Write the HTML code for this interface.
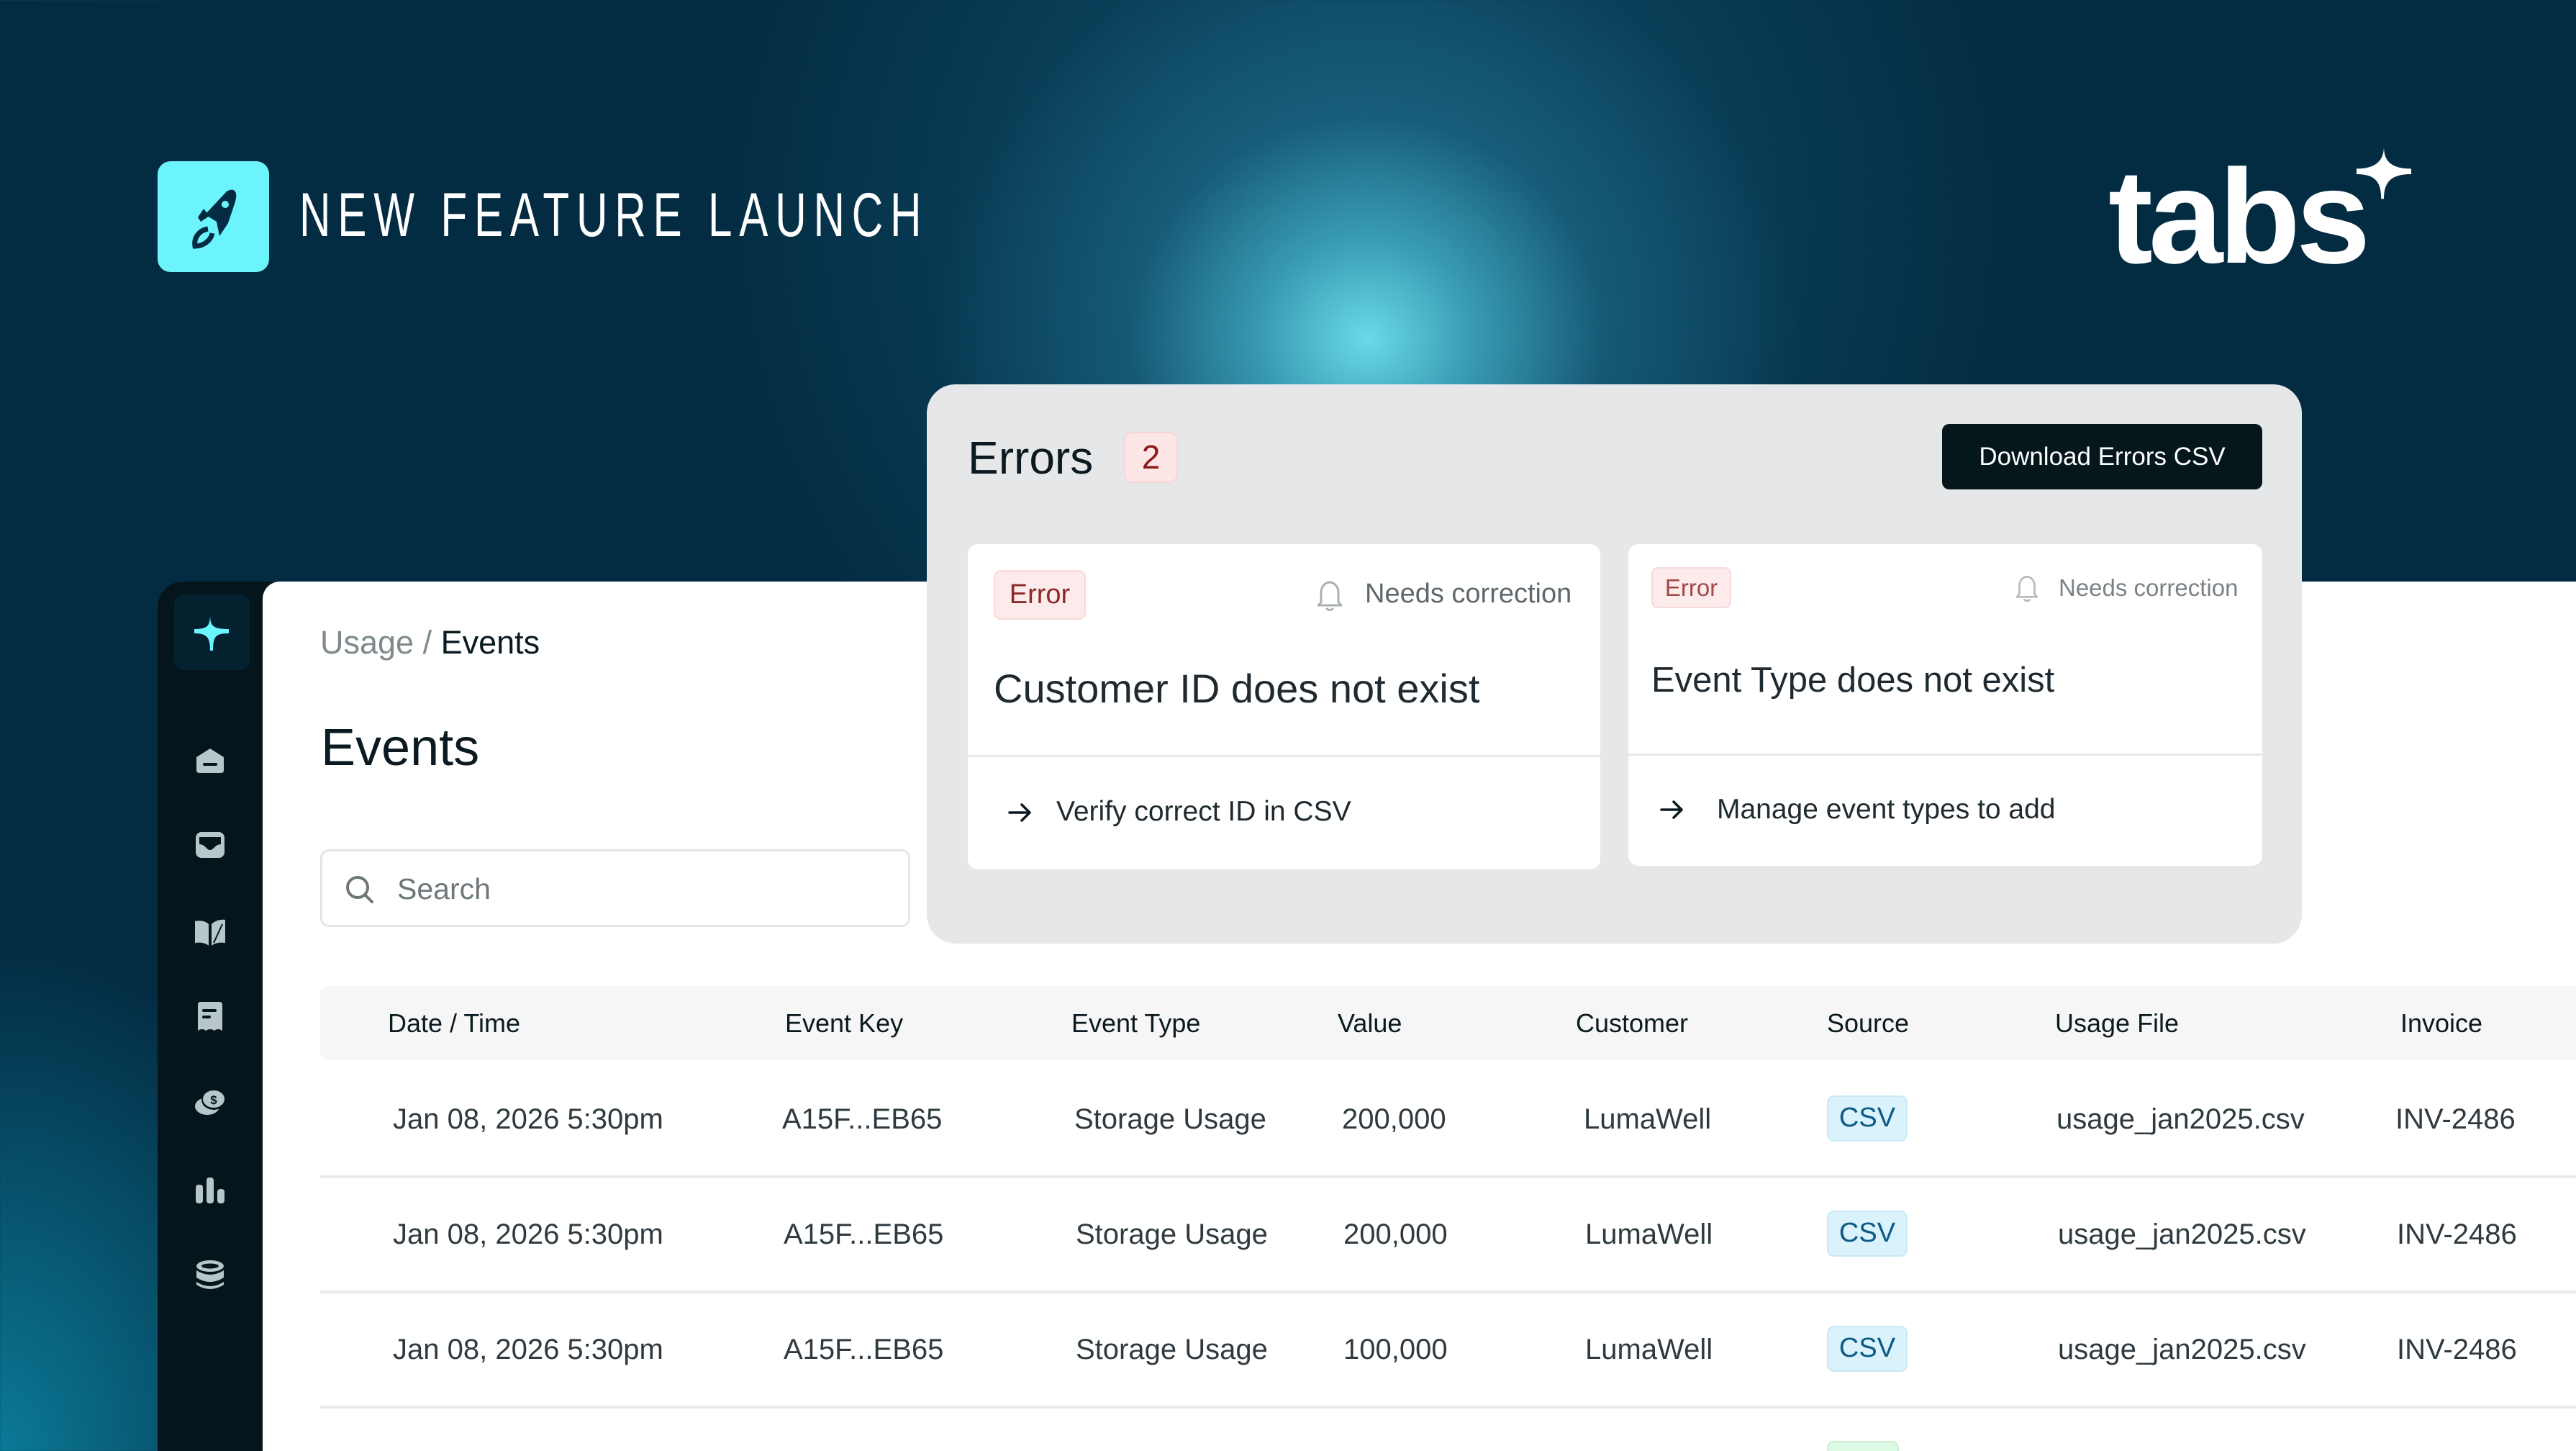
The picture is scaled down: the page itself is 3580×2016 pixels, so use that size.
<!DOCTYPE html>
<html><head><meta charset="utf-8">
<style>
*{margin:0;padding:0;box-sizing:border-box}
html,body{width:3580px;height:2016px;overflow:hidden}
body{position:relative;font-family:"Liberation Sans",sans-serif;
background:
radial-gradient(ellipse 600px 560px at 1900px 470px, rgba(110,225,238,0.95) 0%, rgba(70,180,205,0.75) 25%, rgba(30,110,140,0.5) 55%, rgba(3,44,67,0) 100%),
radial-gradient(ellipse 900px 900px at 1900px 300px, rgba(25,100,130,0.7) 0%, rgba(3,44,67,0) 100%),
radial-gradient(ellipse 500px 700px at 0px 2016px, rgba(12,130,160,0.9) 0%, rgba(3,44,67,0) 100%),
#032c43;}
.a{position:absolute;white-space:nowrap;line-height:1.2}
.card{position:absolute;background:#fff;border-radius:14px}
.ic{position:absolute;left:269px;width:46px;height:46px}
.th{position:absolute;top:1400px;font-size:36px;color:#0a1a20;line-height:44px}
.td{position:absolute;font-size:40px;color:#2f3a40;line-height:48px;white-space:nowrap}
.hr{position:absolute;left:445px;right:0;height:4px;background:#e8e9ea}
.csv{position:absolute;left:2539px;width:112px;height:64px;background:#d9f2fc;border:2px solid #c9e9f6;border-radius:10px;color:#0c5a86;font-size:38px;text-align:center;line-height:58px}
</style></head><body>

<div style="position:absolute;left:219px;top:224px;width:155px;height:154px;background:#6cf4fd;border-radius:18px"></div>
<svg style="position:absolute;left:255px;top:258px" width="84" height="90" viewBox="0 0 84 90">
<path d="M60 8 C70 2 76 8 72 22 L62 52 L50 70 L46 50 L30 40 Z" fill="#032c43"/>
<path d="M28 32 L36 42 L24 50 L20 44 Z" fill="#032c43"/>
<path d="M34 60 C22 62 14 72 16 84 C28 84 38 76 40 66" fill="none" stroke="#032c43" stroke-width="7"/>
<circle cx="58" cy="26" r="5" fill="#6cf4fd"/>
</svg>
<div class="a" style="left:416px;top:248px;font-size:86px;letter-spacing:14px;color:#fff;transform:scaleX(0.7);transform-origin:0 0">NEW FEATURE LAUNCH</div>

<div class="a" style="left:2930px;top:190px;font-size:186px;font-weight:bold;color:#fff;letter-spacing:-6px">tabs</div>
<svg style="position:absolute;left:3275px;top:204px" width="76" height="76" viewBox="0 0 80 80">
<path d="M40 0 C40 22 52 32 80 32 L80 40 C52 40 40 50 40 76 L36 76 C36 52 28 40 0 40 L0 32 C28 32 40 20 40 0Z" fill="#fff"/>
</svg>

<div style="position:absolute;left:219px;top:808px;width:160px;height:1300px;background:#06141b;border-radius:36px 0 0 0"></div>
<div style="position:absolute;left:242px;top:826px;width:105px;height:105px;background:#03212f;border-radius:12px"></div>
<svg style="position:absolute;left:266px;top:850px" width="56" height="56" viewBox="0 0 56 56">
<path d="M26 4 C26 20 30 24 52 24 L52 30 C34 30 30 34 30 54 L26 54 C26 36 22 30 4 30 L4 24 C22 24 26 20 26 4Z" fill="#6cf4fd"/>
</svg>
<svg class="ic" style="top:1032px" viewBox="0 0 46 46"><path d="M4 20 L23 8 L42 20 L42 38 Q42 42 38 42 L8 42 Q4 42 4 38Z" fill="#b7c6c8"/><rect x="13" y="28" width="20" height="4" rx="2" fill="#06141b"/></svg>
<svg class="ic" style="top:1151px" viewBox="0 0 46 46"><rect x="3" y="5" width="40" height="36" rx="8" fill="#b7c6c8"/><path d="M8 12 L38 12 L38 22 C30 22 28 30 23 30 C18 30 16 22 8 22Z" fill="#06141b"/></svg>
<svg class="ic" style="top:1272px" viewBox="0 0 46 46"><path d="M2 8 C10 6 17 8 21 12 L21 42 C16 38 10 37 2 38Z" fill="#b7c6c8"/><path d="M25 12 C29 8 36 5 44 6 L44 38 C36 37 30 38 25 42Z" fill="#b7c6c8"/><path d="M28 38 L40 12" stroke="#06141b" stroke-width="2"/></svg>
<svg class="ic" style="top:1390px" viewBox="0 0 46 46"><path d="M6 6 Q6 2 10 2 L36 2 Q40 2 40 6 L40 42 Q34 38 29 42 Q23 38 17 42 Q12 38 6 42Z" fill="#b7c6c8"/><rect x="12" y="12" width="20" height="4" rx="2" fill="#06141b"/><rect x="12" y="21" width="12" height="4" rx="2" fill="#06141b"/></svg>
<svg class="ic" style="top:1509px" viewBox="0 0 46 46"><ellipse cx="19" cy="28" rx="17" ry="12" fill="#b7c6c8"/><ellipse cx="28" cy="19" rx="17" ry="14" fill="#06141b"/><ellipse cx="28" cy="18" rx="15" ry="12" fill="#b7c6c8"/><text x="28" y="25" font-size="17" font-weight="bold" text-anchor="middle" fill="#06141b" font-family="Liberation Sans">$</text></svg>
<svg class="ic" style="top:1630px" viewBox="0 0 46 46"><rect x="3" y="16" width="10" height="26" rx="4" fill="#b7c6c8"/><rect x="18" y="6" width="10" height="36" rx="4" fill="#b7c6c8"/><rect x="33" y="22" width="10" height="20" rx="4" fill="#b7c6c8"/></svg>
<svg class="ic" style="top:1749px" viewBox="0 0 46 46"><ellipse cx="23" cy="10" rx="19" ry="8" fill="#b7c6c8"/><ellipse cx="23" cy="10" rx="12" ry="3.5" fill="#06141b"/><path d="M4 16 Q23 28 42 16 L42 26 Q23 38 4 26Z" fill="#b7c6c8"/><path d="M4 32 Q23 44 42 32 L42 36 Q23 48 4 36Z" fill="#b7c6c8"/></svg>

<div style="position:absolute;left:365px;top:808px;right:0;bottom:0;background:#fff;border-radius:24px 0 0 0"></div>
<div class="a" style="left:445px;top:866px;font-size:45px;color:#7f8a8d">Usage / <span style="color:#0a1a20">Events</span></div>
<div class="a" style="left:446px;top:996px;font-size:72px;color:#0a1a20">Events</div>
<div style="position:absolute;left:445px;top:1180px;width:820px;height:108px;border:3px solid #e4e5e6;border-radius:12px"></div>
<svg style="position:absolute;left:478px;top:1214px" width="44" height="44" viewBox="0 0 44 44"><circle cx="19" cy="19" r="14" fill="none" stroke="#6d7679" stroke-width="4"/><path d="M29 29 L39 39" stroke="#6d7679" stroke-width="4" stroke-linecap="round"/></svg>
<div class="a" style="left:552px;top:1211px;font-size:41px;color:#6d7679">Search</div>

<div style="position:absolute;left:445px;top:1370px;right:0;height:103px;background:#f6f6f6;border-radius:12px 0 0 12px"></div>
<div class="th" style="left:539px">Date / Time</div>
<div class="th" style="left:1091px">Event Key</div>
<div class="th" style="left:1489px">Event Type</div>
<div class="th" style="left:1859px">Value</div>
<div class="th" style="left:2190px">Customer</div>
<div class="th" style="left:2539px">Source</div>
<div class="th" style="left:2856px">Usage File</div>
<div class="th" style="left:3336px">Invoice</div>

<div class="td" style="left:546px;top:1531px">Jan 08, 2026 5:30pm</div>
<div class="td" style="left:1087px;top:1531px">A15F...EB65</div>
<div class="td" style="left:1493px;top:1531px">Storage Usage</div>
<div class="td" style="left:1865px;top:1531px">200,000</div>
<div class="td" style="left:2201px;top:1531px">LumaWell</div>
<div class="csv" style="top:1522px">CSV</div>
<div class="td" style="left:2858px;top:1531px">usage_jan2025.csv</div>
<div class="td" style="left:3329px;top:1531px">INV-2486</div>
<div class="hr" style="top:1633px"></div>

<div class="td" style="left:546px;top:1691px">Jan 08, 2026 5:30pm</div>
<div class="td" style="left:1089px;top:1691px">A15F...EB65</div>
<div class="td" style="left:1495px;top:1691px">Storage Usage</div>
<div class="td" style="left:1867px;top:1691px">200,000</div>
<div class="td" style="left:2203px;top:1691px">LumaWell</div>
<div class="csv" style="top:1682px">CSV</div>
<div class="td" style="left:2860px;top:1691px">usage_jan2025.csv</div>
<div class="td" style="left:3331px;top:1691px">INV-2486</div>
<div class="hr" style="top:1793px"></div>

<div class="td" style="left:546px;top:1851px">Jan 08, 2026 5:30pm</div>
<div class="td" style="left:1089px;top:1851px">A15F...EB65</div>
<div class="td" style="left:1495px;top:1851px">Storage Usage</div>
<div class="td" style="left:1867px;top:1851px">100,000</div>
<div class="td" style="left:2203px;top:1851px">LumaWell</div>
<div class="csv" style="top:1842px">CSV</div>
<div class="td" style="left:2860px;top:1851px">usage_jan2025.csv</div>
<div class="td" style="left:3331px;top:1851px">INV-2486</div>
<div class="hr" style="top:1953px"></div>
<div style="position:absolute;left:2539px;top:2002px;width:100px;height:30px;background:#dcf9e4;border:2px solid #c8efd4;border-radius:10px"></div>

<div style="position:absolute;left:1288px;top:534px;width:1911px;height:777px;background:#e6e7e9;border-radius:40px"></div>
<div class="a" style="left:1345px;top:598px;font-size:64px;color:#0a1a20">Errors</div>
<div style="position:absolute;left:1562px;top:600px;width:75px;height:71px;background:#fde6e6;border:2px solid #f8d6d6;border-radius:12px;color:#8b1a1a;font-size:46px;text-align:center;line-height:67px">2</div>
<div style="position:absolute;left:2699px;top:589px;width:445px;height:91px;background:#06171c;border-radius:10px;color:#fff;font-size:35px;text-align:center;line-height:91px">Download Errors CSV</div>

<div class="card" style="left:1345px;top:756px;width:879px;height:452px"></div>
<div style="position:absolute;left:1345px;top:1049px;width:879px;height:3px;background:#e6e7e9"></div>
<div style="position:absolute;left:1381px;top:792px;width:128px;height:69px;background:#fdeaea;border:2px solid #f8dada;border-radius:10px;color:#8b2a2a;font-size:38px;text-align:center;line-height:65px">Error</div>
<svg style="position:absolute;left:1828px;top:803px" width="40" height="48" viewBox="0 0 40 48"><path d="M8 34 L8 20 C8 12 14 6 20 6 C26 6 32 12 32 20 L32 34 L36 38 L4 38 Z" fill="none" stroke="#a9afb2" stroke-width="3" stroke-linejoin="round"/><path d="M15 42 Q20 47 25 42" fill="none" stroke="#a9afb2" stroke-width="3"/></svg>
<div class="a" style="left:1897px;top:803px;font-size:38px;color:#5f686c">Needs correction</div>
<div class="a" style="left:1381px;top:923px;font-size:56px;color:#1f2a30">Customer ID does not exist</div>
<svg style="position:absolute;left:1400px;top:1114px" width="36" height="30" viewBox="0 0 36 30"><path d="M3 15 H31 M20 4 L31 15 L20 26" fill="none" stroke="#0a1a20" stroke-width="3.5" stroke-linecap="round" stroke-linejoin="round"/></svg>
<div class="a" style="left:1468px;top:1105px;font-size:39px;color:#1f2a30">Verify correct ID in CSV</div>

<div class="card" style="left:2263px;top:756px;width:881px;height:447px"></div>
<div style="position:absolute;left:2263px;top:1047px;width:881px;height:3px;background:#e6e7e9"></div>
<div style="position:absolute;left:2295px;top:788px;width:111px;height:57px;background:#fdeaea;border:2px solid #f8dada;border-radius:9px;color:#a04848;font-size:33px;text-align:center;line-height:53px">Error</div>
<svg style="position:absolute;left:2799px;top:796px" width="36" height="42" viewBox="0 0 40 48"><path d="M8 34 L8 20 C8 12 14 6 20 6 C26 6 32 12 32 20 L32 34 L36 38 L4 38 Z" fill="none" stroke="#b5babd" stroke-width="3" stroke-linejoin="round"/><path d="M15 42 Q20 47 25 42" fill="none" stroke="#b5babd" stroke-width="3"/></svg>
<div class="a" style="left:2861px;top:797px;font-size:33px;color:#7a8286">Needs correction</div>
<div class="a" style="left:2295px;top:916px;font-size:49px;color:#1f2a30">Event Type does not exist</div>
<svg style="position:absolute;left:2306px;top:1110px" width="36" height="30" viewBox="0 0 36 30"><path d="M3 15 H31 M20 4 L31 15 L20 26" fill="none" stroke="#0a1a20" stroke-width="3.5" stroke-linecap="round" stroke-linejoin="round"/></svg>
<div class="a" style="left:2386px;top:1102px;font-size:39px;color:#1f2a30">Manage event types to add</div>

</body></html>
